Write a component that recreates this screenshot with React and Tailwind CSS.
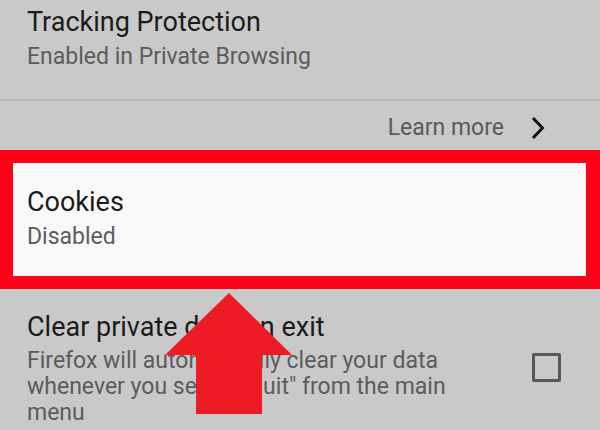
import React from 'react';

function Arrow() {
  return (
    <svg className="absolute left-0 top-0" width="600" height="430" viewBox="0 0 600 430">
      <polygon points="229,293 292,355 262,355 262,414 196,414 196,355 165,355" fill="#ed1c24" />
    </svg>
  );
}

function App() {
  return (
    <div className="relative w-[600px] h-[430px] overflow-hidden bg-[#c9c9c9]" style={{ fontFamily: 'Roboto, "Noto Sans", sans-serif' }}>
      <div className="h-[99px] pl-[27px] pt-[6px]">
        <div className="text-[27px] leading-[32px] text-[#1b1b1b]">Tracking Protection</div>
        <div className="text-[23px] leading-[38px] text-[#5c5c5c]">Enabled in Private Browsing</div>
      </div>
      <div className="h-[2px] bg-[#b4b4b4]" />
      <div className="h-[49px] flex items-center justify-end pr-[55px] pt-[5px]">
        <span className="text-[23px] text-[#5a5a5a]">Learn more</span>
        <svg className="ml-[27px]" width="14" height="24" viewBox="0 0 14 24">
          <path d="M2 2 L11.5 12 L2 22" fill="none" stroke="#111" strokeWidth="3" />
        </svg>
      </div>
      <div className="h-[139px] border-[13px] border-r-[14px] border-[#fe0018] bg-[#f8f8f8] pl-[14px] pt-[23px]">
        <div className="text-[27px] leading-[32px] text-[#1b1b1b]">Cookies</div>
        <div className="text-[23px] leading-[38px] text-[#5c5c5c]">Disabled</div>
      </div>
      <div className="flex pl-[27px] pt-[22px]">
        <div className="flex-1">
          <div className="text-[27px] leading-[32px] text-[#1b1b1b]">Clear private data on exit</div>
          <div className="mt-[5px] text-[23px] leading-[26px] text-[#5c5c5c]">
            Firefox will automatically clear your data<br />
            whenever you select "Quit" from the main<br />
            menu
          </div>
        </div>
        <div className="w-[29px] h-[29px] mt-[42px] mr-[39px] border-[3px] border-[#575757] rounded-[2px]" />
      </div>
      <Arrow />
    </div>
  );
}

export default App;
